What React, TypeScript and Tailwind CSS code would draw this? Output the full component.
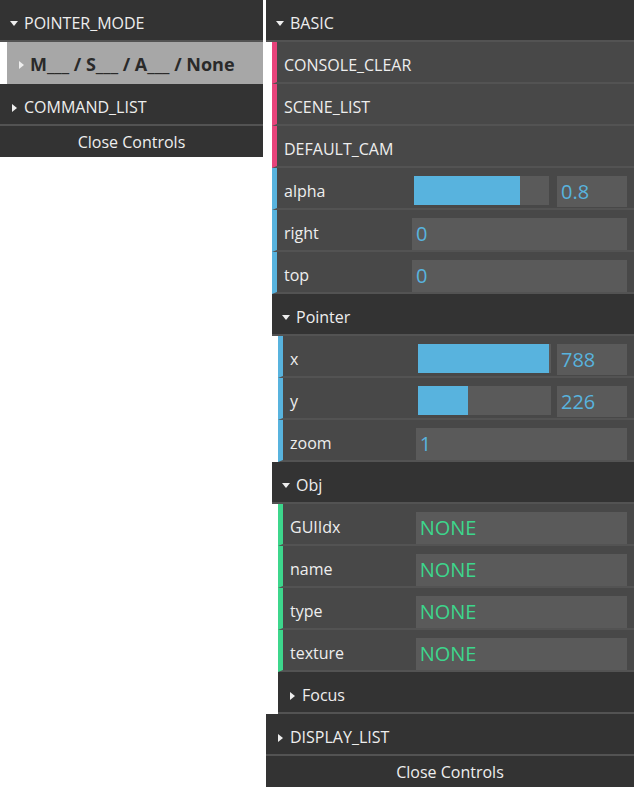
import React from 'react'

const font = "font-['Open_Sans','Noto_Sans',sans-serif]"

function Tri({ open }: { open: boolean }) {
  return open ? (
    <svg width="8" height="5" className="shrink-0"><polygon points="0,0 8,0 4,5" fill="#eeeeee" /></svg>
  ) : (
    <svg width="5" height="8" className="shrink-0"><polygon points="0,0 5,4 0,8" fill="#eeeeee" /></svg>
  )
}

function Title({ label, open }: { label: string; open: boolean }) {
  return (
    <div className="flex h-[42px] items-center border-b-2 border-[#535353] bg-[#333333] pt-[6px] text-[16px] text-[#eeeeee]">
      <span className={open ? 'ml-[10px] mr-[6px] pt-px' : 'ml-[12px] mr-[7px] pt-px'}>
        <Tri open={open} />
      </span>
      <span>{label}</span>
    </div>
  )
}

function Button({ label }: { label: string }) {
  return (
    <div className="flex h-[42px] items-center border-b-2 border-l-[5px] border-b-[#535353] border-l-[#e8437b] bg-[#484848] pl-[7px] pt-[6px] text-[16px] text-[#eeeeee]">
      {label}
    </div>
  )
}

function Row({ label, color, children }: { label: string; color: string; children: React.ReactNode }) {
  return (
    <div className={`flex h-[42px] items-center border-b-2 border-l-[5px] border-b-[#535353] bg-[#484848] pl-[7px] pr-[7px] pt-[7px] text-[16px] text-[#eeeeee] ${color}`}>
      <div className="w-[37.3%] shrink-0 pb-px">{label}</div>
      <div className="flex-1">{children}</div>
    </div>
  )
}

function Slider({ pct, value }: { pct: number; value: string }) {
  return (
    <div className="flex items-start">
      <div className="ml-[2px] h-[29px] w-[63%] bg-[#5a5a5a]">
        <div className="h-full bg-[#58b3de]" style={{ width: `${pct}%` }} />
      </div>
      <div className="ml-auto flex h-[31px] w-[70px] items-center bg-[#5a5a5a] pl-[4px] text-[20px] text-[#58b3de]">{value}</div>
    </div>
  )
}

function Field({ value, green }: { value: string; green?: boolean }) {
  return (
    <div className={`flex h-[32px] w-full items-center bg-[#5a5a5a] pl-[4px] text-[20px] ${green ? 'text-[#3dd68c]' : 'text-[#58b3de]'}`}>
      {value}
    </div>
  )
}

function Close() {
  return (
    <div className="flex h-[31px] items-center justify-center bg-[#333333] text-[16px] text-[#eeeeee]">Close Controls</div>
  )
}

export default function App() {
  return (
    <div className={`flex min-h-screen items-start gap-[3px] bg-white ${font}`}>
      <div className="w-[263px]">
        <Title label="POINTER_MODE" open />
        <div className="ml-[7px] flex h-[42px] items-center bg-[#a7a7a7] pt-[3px] text-[18px] font-bold text-[#2a2a2a]">
          <span className="ml-[12px] mr-[6px]"><Tri open={false} /></span>
          <span>M___ / S___ / A___ / None</span>
        </div>
        <Title label="COMMAND_LIST" open={false} />
        <Close />
      </div>

      <div className="flex-1">
        <Title label="BASIC" open />
        <div className="ml-[6px]">
          <Button label="CONSOLE_CLEAR" />
          <Button label="SCENE_LIST" />
          <Button label="DEFAULT_CAM" />
          <Row label="alpha" color="border-l-[#58b3de]"><Slider pct={78} value="0.8" /></Row>
          <Row label="right" color="border-l-[#58b3de]"><Field value="0" /></Row>
          <Row label="top" color="border-l-[#58b3de]"><Field value="0" /></Row>
          <Title label="Pointer" open />
          <div className="ml-[6px]">
            <Row label="x" color="border-l-[#58b3de]"><Slider pct={99} value="788" /></Row>
            <Row label="y" color="border-l-[#58b3de]"><Slider pct={38} value="226" /></Row>
            <Row label="zoom" color="border-l-[#58b3de]"><Field value="1" /></Row>
          </div>
          <Title label="Obj" open />
          <div className="ml-[6px]">
            <Row label="GUIIdx" color="border-l-[#3dd68c]"><Field value="NONE" green /></Row>
            <Row label="name" color="border-l-[#3dd68c]"><Field value="NONE" green /></Row>
            <Row label="type" color="border-l-[#3dd68c]"><Field value="NONE" green /></Row>
            <Row label="texture" color="border-l-[#3dd68c]"><Field value="NONE" green /></Row>
            <Title label="Focus" open={false} />
          </div>
        </div>
        <Title label="DISPLAY_LIST" open={false} />
        <Close />
      </div>
    </div>
  )
}
